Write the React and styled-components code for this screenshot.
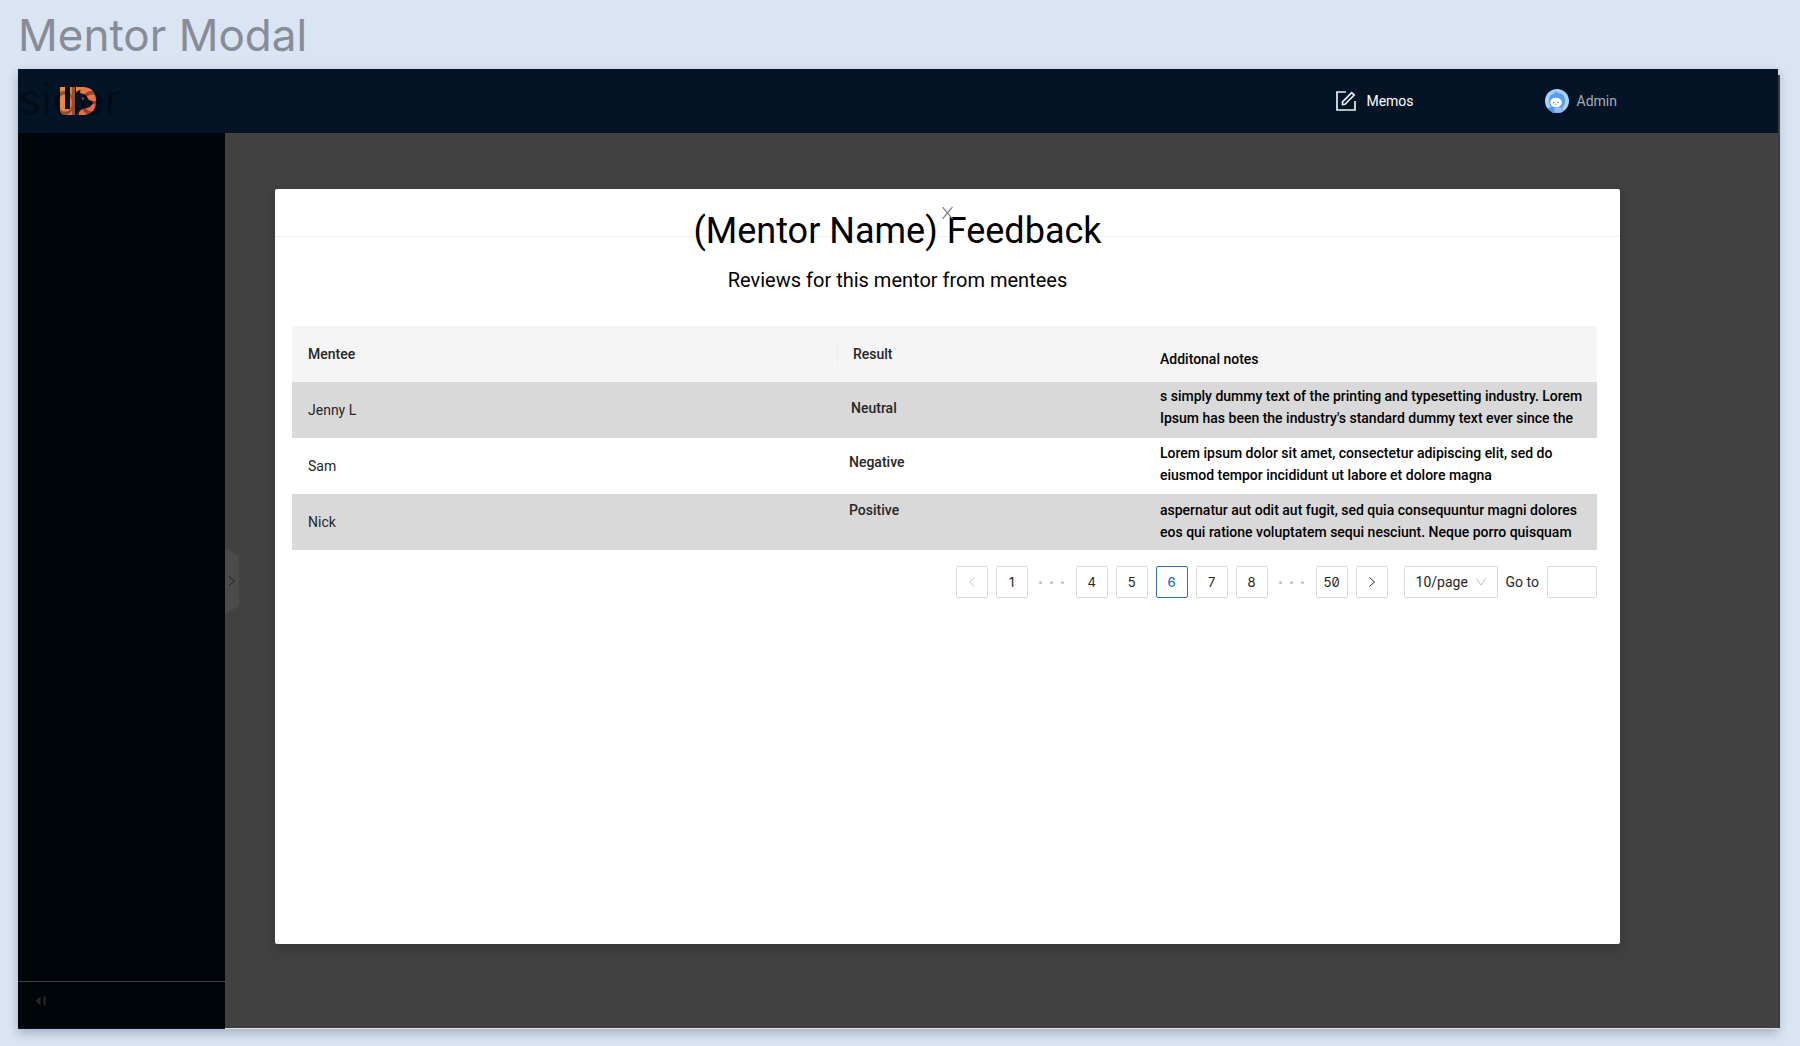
import React from "react";
import styled, { createGlobalStyle } from "styled-components";

const GlobalStyle = createGlobalStyle`
  *, *::before, *::after { box-sizing: border-box; }
  body {
    margin: 0;
    background: #dae4f2;
    font-family: Roboto, "Liberation Sans", sans-serif;
    font-size: 14px;
    line-height: 22px;
    color: #262626;
  }
  h1, h2, p { margin: 0; font-weight: 400; }
  button, input, select { font: inherit; color: inherit; margin: 0; }
`;

const Page = styled.div`
  display: flex;
  flex-direction: column;
  min-height: 100vh;
  padding: 8px 20px 17px 18px;
`;

const PageTitle = styled.h1`
  font-family: Inter, "Liberation Sans", sans-serif;
  font-size: 44px;
  line-height: 54px;
  color: #868d98;
  padding-bottom: 7px;
`;

const Frame = styled.div`
  flex: 1;
  display: flex;
  flex-direction: column;
  margin-right: 2px;
  background: #001529;
  box-shadow: 0 4px 10px rgba(0, 21, 41, 0.25);
`;

const Header = styled.header`
  position: relative;
  display: flex;
  align-items: center;
  height: 64px;
  padding: 0 161px 0 42px;
  background: #031427;
`;

const LayerLabel = styled.span`
  position: absolute;
  left: 0;
  top: 3px;
  font-family: Inter, "Liberation Sans", sans-serif;
  font-size: 44px;
  line-height: 54px;
  color: rgba(0, 0, 0, 0.4);
`;

const Logo = styled.svg`
  width: 36px;
  height: 28px;
`;

const HeaderLink = styled.a`
  display: flex;
  align-items: center;
  gap: ${(p) => p.$gap}px;
  color: ${(p) => (p.$muted ? "#a6acb3" : "#ffffff")};
  text-decoration: none;
  margin-left: ${(p) => (p.$first ? "auto" : "131px")};
`;

const Body = styled.div`
  flex: 1;
  display: flex;
`;

const Sider = styled.nav`
  display: flex;
  flex-direction: column;
  justify-content: flex-end;
  width: 207px;
  background: #000509;
  border-bottom: 1px solid #001529;
`;

const CollapseButton = styled.button`
  height: 47px;
  padding: 0 0 8px 17px;
  text-align: left;
  border: 0;
  border-top: 1px solid #404346;
  background: transparent;
`;

const Main = styled.main`
  position: relative;
  flex: 1;
  padding: 56px 158px 84px 50px;
  display: flex;
  background: #414141;
  border-bottom: 1px solid #e0e0e0;

  &::after {
    content: "";
    position: absolute;
    top: -58px;
    bottom: 0;
    left: 100%;
    width: 2px;
    background: #3b3c3f;
  }
`;

const SiderHandle = styled.button`
  position: absolute;
  left: 0;
  top: 415px;
  width: 14px;
  height: 66px;
  padding: 0;
  border: 0;
  display: grid;
  place-items: center;
  background: #4b4b4b;
  clip-path: polygon(0 0, 100% 12%, 100% 88%, 0 100%);
`;

const Modal = styled.section`
  position: relative;
  flex: 1;
  padding: 0 23px 0 17px;
  background: #ffffff;
  border-radius: 2px;
  box-shadow: 0 4px 12px rgba(0, 0, 0, 0.2);
`;

const ModalRule = styled.hr`
  position: absolute;
  left: 0;
  right: 0;
  top: 47px;
  height: 1px;
  margin: 0;
  border: 0;
  background: #f0f0f0;
`;

const CloseButton = styled.button`
  position: absolute;
  left: 50%;
  top: 18px;
  width: 12px;
  height: 12px;
  margin-left: -6px;
  padding: 0;
  border: 0;
  display: flex;
  background: transparent;
`;

const ModalHeading = styled.header`
  position: relative;
  padding: 20px 94px 32px 0;
  text-align: center;
  color: #000000;
`;

const ModalTitle = styled.h2`
  font-size: 36px;
  line-height: 44px;
`;

const Subtitle = styled.p`
  padding-top: 14px;
  font-size: 20px;
  line-height: 27px;
`;

const Table = styled.table`
  width: 100%;
  table-layout: fixed;
  border-collapse: collapse;
  text-align: left;
`;

const Col = styled.col`
  width: ${(p) => p.$width};
`;

const HeadCell = styled.th`
  height: 56px;
  padding: ${(p) => (p.$low ? "10px 13px 0 0" : "0 16px")};
  font-weight: 500;
  background: #f5f5f5;
  color: ${(p) => (p.$low ? "#000000" : "#262626")};
  ${(p) =>
    p.$rule &&
    "background: linear-gradient(#ececec, #ececec) left center / 1px 22px no-repeat #f5f5f5;"}
`;

const Row = styled.tr`
  height: 56px;
  background: ${(p) => (p.$shaded ? "#d9d9d9" : "#ffffff")};
`;

const NameCell = styled.td`
  padding: 0 16px;
`;

const ResultCell = styled.td`
  padding: 0 0 ${(p) => p.$lift}px ${(p) => p.$inset}px;
  font-weight: 500;
`;

const NotesCell = styled.td`
  padding: 0 13px ${(p) => p.$lift}px 0;
  font-weight: 500;
  color: #000000;
`;

const Pagination = styled.nav`
  display: flex;
  justify-content: flex-end;
  gap: 8px;
  padding-top: 16px;
`;

const PageButton = styled.button`
  width: 32px;
  height: 32px;
  padding: 0;
  display: grid;
  place-items: center;
  border: 1px solid ${(p) => (p.$current ? "#2f6fb8" : "#d9d9d9")};
  border-radius: 2px;
  background: #ffffff;
  color: ${(p) => (p.$current ? "#2f6fb8" : "#262626")};
  font-family: Inter, "Liberation Sans", sans-serif;
  font-size: 13px;
  font-feature-settings: "zero";
  font-weight: ${(p) => (p.$current ? 500 : 400)};
`;

const Gap = styled.span`
  width: 32px;
  display: flex;
  align-items: center;
  justify-content: center;
  gap: 8px;

  i {
    width: 3px;
    height: 3px;
    border-radius: 50%;
    background: #bfbfbf;
  }
`;

const SizePicker = styled.label`
  position: relative;
  margin-left: 8px;
  width: 94px;

  svg {
    position: absolute;
    right: 12px;
    top: 11px;
    pointer-events: none;
  }
`;

const SizeSelect = styled.select`
  appearance: none;
  width: 100%;
  height: 32px;
  padding: 0 11px;
  border: 1px solid #d9d9d9;
  border-radius: 2px;
  background: #ffffff;
`;

const GoTo = styled.label`
  display: flex;
  align-items: center;
  gap: 8px;
`;

const GoToInput = styled.input`
  width: 50px;
  height: 32px;
  border: 1px solid #d9d9d9;
  border-radius: 2px;
  background: #ffffff;
`;

const Chevron = ({ points, color, size = 10 }) => (
  <svg width={size} height={size} viewBox="0 0 10 10" fill="none" stroke={color} aria-hidden="true">
    <polyline points={points} />
  </svg>
);

const BearLogo = () => (
  <Logo viewBox="0 0 36 28" role="img" aria-label="UD">
    <defs>
      <linearGradient id="ember" gradientUnits="userSpaceOnUse" x1="0" y1="0" x2="36" y2="20">
        <stop offset="0" stopColor="#ea9145" />
        <stop offset="1" stopColor="#ea6545" />
      </linearGradient>
    </defs>
    <path
      fill="url(#ember)"
      d="M0 0H5V22H10V0H15V28H5Q0 28 0 23z"
    />
    <path
      fill="url(#ember)"
      d="M16 0H24Q36 1 36 14T24 28H18.500Q18.500 23 24 21.500Q31 21 33 16L32 14Q28.500 13.500 27.500 11Q27 8 23.500 7L20 6L20.500 2.500L17 4.500L16 6z"
    />
    <circle cx="23" cy="11.500" r="1.200" fill="#ea7a45" />
  </Logo>
);

const MemoIcon = () => (
  <svg width="20" height="20" viewBox="0 0 20 20" fill="none" stroke="#e3f3f5" strokeWidth="1.700" aria-hidden="true">
    <path d="M10 1H1v18h18V10" />
    <path d="M6.500 13.500V10.800L15.700 1.600L18.200 4.100L9 13.300z" />
  </svg>
);

const Avatar = () => (
  <svg width="24" height="24" viewBox="0 0 24 24" aria-hidden="true">
    <defs>
      <clipPath id="disc">
        <circle cx="12" cy="12" r="12" />
      </clipPath>
    </defs>
    <g clipPath="url(#disc)">
      <rect width="24" height="24" fill="#a9d2fb" />
      <path d="M4 13Q3 5 10 4.500L6.500 3L11 3.500L10.500 1.500L13 4Q20 4 20 12Q20 18 16 19H7Q4 17 4 13z" fill="#5a9cf0" />
      <path d="M7 24L10 18H16L19 24z" fill="#8fbdf6" stroke="#4d86dc" strokeWidth="0.600" />
      <path d="M3 19L8 18L10 24H4z" fill="#4f94ee" />
      <ellipse cx="11" cy="13.500" rx="5.800" ry="4.800" fill="#ffffff" />
      <circle cx="8.500" cy="13.500" r="0.700" fill="#3f6fc4" />
      <circle cx="13" cy="13.500" r="0.700" fill="#3f6fc4" />
      <path d="M10 15.500h1.500" stroke="#3f6fc4" strokeWidth="0.600" />
    </g>
  </svg>
);

const feedback = [
  {
    name: "Jenny L",
    result: "Neutral",
    inset: 14,
    lift: 4,
    noteLift: 6,
    note: "s simply dummy text of the printing and typesetting industry. Lorem Ipsum has been the industry's standard dummy text ever since the",
  },
  {
    name: "Sam",
    result: "Negative",
    inset: 12,
    lift: 8,
    noteLift: 4,
    note: "Lorem ipsum dolor sit amet, consectetur adipiscing elit, sed do eiusmod tempor incididunt ut labore et dolore magna",
  },
  {
    name: "Nick",
    result: "Positive",
    inset: 12,
    lift: 24,
    noteLift: 2,
    note: "aspernatur aut odit aut fugit, sed quia consequuntur magni dolores eos qui ratione voluptatem sequi nesciunt. Neque porro quisquam",
  },
];

const pages = [1, "a", 4, 5, 6, 7, 8, "b", 50];

export default function App() {
  return (
    <>
      <GlobalStyle />
      <Page>
        <PageTitle>Mentor Modal</PageTitle>
        <Frame>
          <Header>
            <BearLogo />
            <LayerLabel>sider</LayerLabel>
            <HeaderLink href="#memos" $first $gap={10}>
              <MemoIcon />
              Memos
            </HeaderLink>
            <HeaderLink href="#admin" $muted $gap={8}>
              <Avatar />
              Admin
            </HeaderLink>
          </Header>
          <Body>
            <Sider>
              <CollapseButton aria-label="Collapse menu">
                <svg width="12" height="10" viewBox="0 0 12 10" fill="#25282a" aria-hidden="true">
                  <path d="M5.500 0.500v9L0.500 5zM8.500 0.500h2v9h-2z" />
                </svg>
              </CollapseButton>
            </Sider>
            <Main>
              <SiderHandle aria-label="Open panel">
                <Chevron points="2,0.500 7.500,5 2,9.500" color="#222222" />
              </SiderHandle>
              <Modal role="dialog" aria-labelledby="modal-title">
                <ModalRule />
                <ModalHeading>
                  <ModalTitle id="modal-title">(Mentor Name) Feedback</ModalTitle>
                  <Subtitle>Reviews for this mentor from mentees</Subtitle>
                </ModalHeading>
                <CloseButton aria-label="Close">
                  <svg width="12" height="12" viewBox="0 0 12 12" stroke="#808080" strokeWidth="1.200" aria-hidden="true">
                    <path d="M0.500 0L10.500 12M10.500 0L0.500 12" />
                  </svg>
                </CloseButton>
                <Table>
                  <colgroup>
                    <Col $width="545px" />
                    <Col />
                    <Col $width="437px" />
                  </colgroup>
                  <thead>
                    <tr>
                      <HeadCell scope="col">Mentee</HeadCell>
                      <HeadCell scope="col" $rule>Result</HeadCell>
                      <HeadCell scope="col" $low>Additonal notes</HeadCell>
                    </tr>
                  </thead>
                  <tbody>
                    {feedback.map((f, i) => (
                      <Row key={f.name} $shaded={i % 2 === 0}>
                        <NameCell>{f.name}</NameCell>
                        <ResultCell $inset={f.inset} $lift={f.lift}>{f.result}</ResultCell>
                        <NotesCell $lift={f.noteLift}>{f.note}</NotesCell>
                      </Row>
                    ))}
                  </tbody>
                </Table>
                <Pagination aria-label="Pages">
                  <PageButton aria-label="Previous page" disabled>
                    <Chevron points="7.500,0.500 2.500,5 7.500,9.500" color="#c4c4c4" />
                  </PageButton>
                  {pages.map((p) =>
                    typeof p === "number" ? (
                      <PageButton key={p} $current={p === 6}>{p}</PageButton>
                    ) : (
                      <Gap key={p}><i /><i /><i /></Gap>
                    )
                  )}
                  <PageButton aria-label="Next page">
                    <Chevron points="2.500,0.500 7.500,5 2.500,9.500" color="#262626" />
                  </PageButton>
                  <SizePicker>
                    <SizeSelect aria-label="Rows per page" defaultValue="10">
                      <option value="10">10/page</option>
                      <option value="20">20/page</option>
                    </SizeSelect>
                    <Chevron points="0.500,1.500 5,8 9.500,1.500" color="#bfbfbf" />
                  </SizePicker>
                  <GoTo>
                    Go to
                    <GoToInput type="text" />
                  </GoTo>
                </Pagination>
              </Modal>
            </Main>
          </Body>
        </Frame>
      </Page>
    </>
  );
}
